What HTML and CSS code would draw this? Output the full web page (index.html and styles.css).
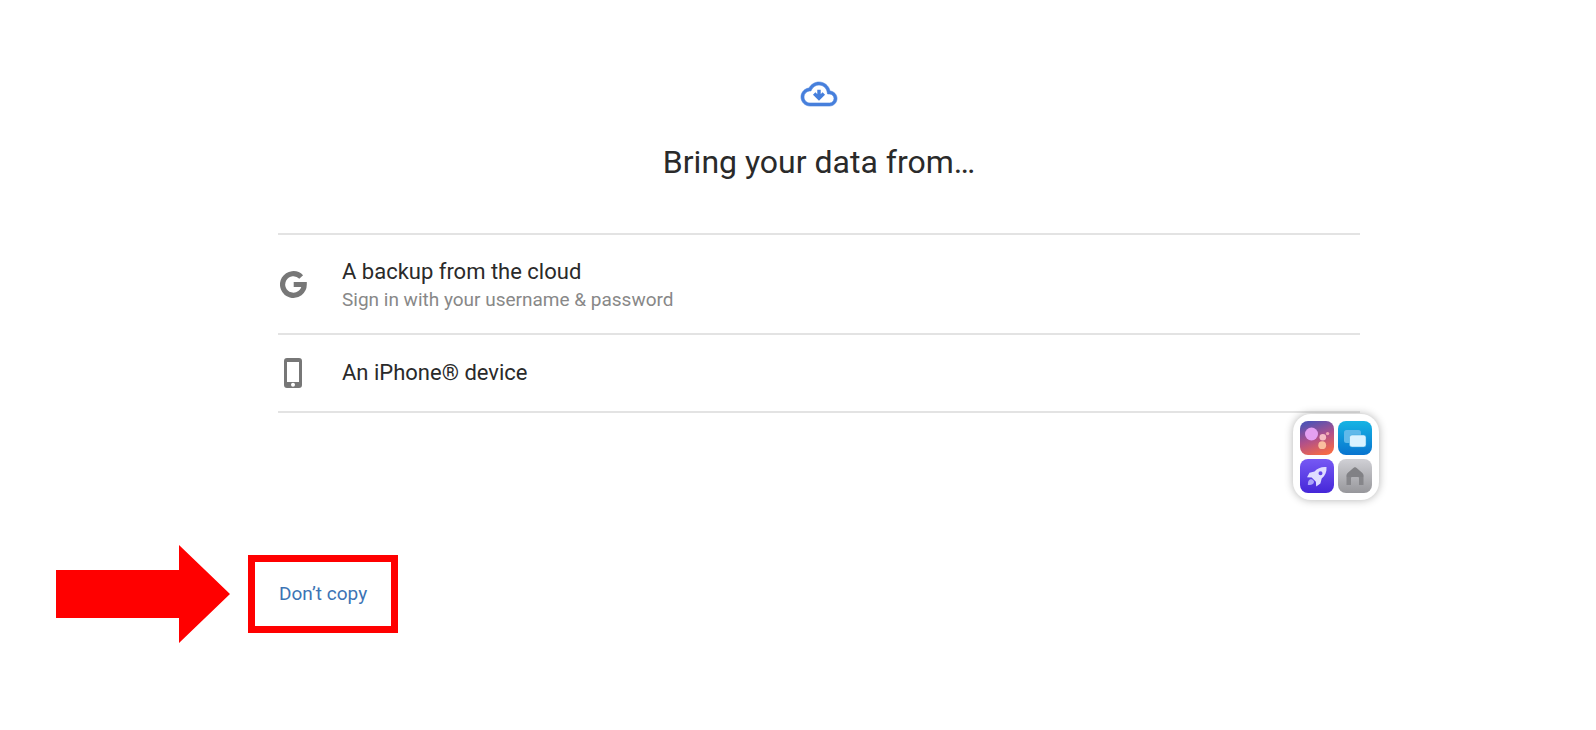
FILE: index.html
```html
<!DOCTYPE html>
<html lang="en">
<head>
<meta charset="utf-8">
<title>Bring your data from…</title>
<link rel="stylesheet" href="styles.css">
</head>
<body>
<main class="setup">
  <header class="intro">
    <svg class="cloud" viewBox="0 4 24 16" aria-hidden="true">
      <path fill="currentColor" stroke="currentColor" stroke-width=".4" d="M19.35 10.04C18.67 6.59 15.64 4 12 4 9.11 4 6.6 5.64 5.35 8.04 2.34 8.36 0 10.91 0 14c0 3.31 2.69 6 6 6h13c2.76 0 5-2.24 5-5 0-2.64-2.05-4.78-4.65-4.96zM19 18H6c-2.21 0-4-1.79-4-4 0-2.05 1.53-3.76 3.56-3.97l1.07-.11.5-.95C8.08 7.14 9.94 6 12 6c2.62 0 4.88 1.86 5.39 4.43l.3 1.5 1.53.11c1.56.1 2.78 1.41 2.78 2.96 0 1.65-1.35 3-3 3z"/>
      <path fill="none" stroke="currentColor" stroke-width="2.300" d="M12 9.200v5.800M8.800 11.700l3.200 3.200 3.200-3.200"/>
    </svg>
    <h1 class="title">Bring your data from…</h1>
  </header>
  <div class="options">
    <button class="option option-tall" type="button">
      <span class="option-icon">
        <svg class="google" viewBox="0 0 27 27" aria-hidden="true"><path fill="none" stroke="currentColor" stroke-width="5.200" d="M21.200 6A10.800 10.800 0 1 0 24.200 13.500H13.700"/></svg>
      </span>
      <span class="option-text">
        <span class="option-name">A backup from the cloud</span>
        <span class="option-note">Sign in with your username &amp; password</span>
      </span>
    </button>
    <button class="option" type="button">
      <span class="option-icon">
        <svg class="phone" viewBox="0 0 18 30" aria-hidden="true"><path fill="currentColor" fill-rule="evenodd" d="M3 0h12a3 3 0 0 1 3 3v24a3 3 0 0 1-3 3H3a3 3 0 0 1-3-3V3a3 3 0 0 1 3-3zM3 4v20h12V4zM9 24.800a2 2 0 1 0 0 4 2 2 0 0 0 0-4z"/></svg>
      </span>
      <span class="option-text">
        <span class="option-name">An iPhone® device</span>
      </span>
    </button>
  </div>
  <footer class="actions">
    <svg class="arrow" viewBox="0 0 174 98" aria-hidden="true"><path fill="#f00" d="M0 25h123V0l51 49-51 49V73H0z"/></svg>
    <button class="skip" type="button">Don’t copy</button>
  </footer>
</main>
<aside class="launcher" aria-label="Shortcuts">
  <button class="tile tile-assistant" type="button" aria-label="Assistant">
    <svg viewBox="0 0 34 34"><circle cx="11.500" cy="13" r="6.500" fill="#e4a0f2"/><circle cx="22.800" cy="16.200" r="3.300" fill="#f5bcc4"/><circle cx="22.200" cy="24.200" r="3.900" fill="#fabe9f"/><circle cx="27.600" cy="12.600" r="1.700" fill="#f0a4b1"/></svg>
  </button>
  <button class="tile tile-windows" type="button" aria-label="Windows">
    <svg viewBox="0 0 34 34"><rect x="6" y="9" width="17" height="13" rx="2.500" fill="#5fb9ea"/><rect x="11.500" y="14" width="16.500" height="12" rx="2.500" fill="#d9f2ff" stroke="#35a5df" stroke-width=".5"/></svg>
  </button>
  <button class="tile tile-boost" type="button" aria-label="Boost">
    <svg viewBox="0 0 34 34"><path fill="#dfdcff" fill-rule="evenodd" d="M26.500 8c-5-.5-9 1.100-12 4.500l-5 1.200-2.500 4.500 4.700.3 4.200 4.300.3 4.700 4.200-3 1.300-5c3.500-3 5.200-6.500 4.800-11.500zM20.500 12.300a2 2 0 1 1 0 4 2 2 0 0 1 0-4z"/><path fill="#aba3fa" d="M12 20.300c-3-.8-4.300 2-4.100 5.800 3.900.2 6.500-1.100 6-4z"/></svg>
  </button>
  <button class="tile tile-home" type="button" aria-label="Home">
    <svg viewBox="0 0 34 34"><path fill="#86868a" d="M8.500 26V16.500q0-1.500 1.200-2.500l5.700-5q1.600-1.400 3.200 0l5.700 5q1.200 1 1.200 2.500V26h-4.500v-7q0-1-1-1h-6q-1 0-1 1v7z"/><path fill="#77777b" d="M8.500 18v-1.500q0-1.500 1.200-2.500l5.700-5q1.600-1.400 3.200 0l5.700 5q1.200 1 1.200 2.500V18z" opacity=".3"/></svg>
  </button>
</aside>
</body>
</html>
```
FILE: styles.css
```css
* {
  box-sizing: border-box;
}

body {
  margin: 0;
  background: #fff;
  color: #2a2a2a;
  font-family: Roboto, "Liberation Sans", sans-serif;
}

button {
  margin: 0;
  border: 0;
  background: none;
  color: inherit;
  font: inherit;
  text-align: left;
  cursor: pointer;
}

svg {
  display: block;
}

.setup {
  padding: 82px 236px 40px 278px;
}

.intro {
  display: flex;
  flex-direction: column;
  align-items: center;
}

.cloud {
  width: 36px;
  height: 24px;
  overflow: visible;
  color: #467fdc;
}

.title {
  margin: 36px 0 51px;
  font-size: 32px;
  line-height: 40px;
  font-weight: 400;
}

.options {
  display: flex;
  flex-direction: column;
  border-top: 2px solid #e3e3e3;
}

.option {
  display: flex;
  align-items: center;
  gap: 34px;
  width: 100%;
  min-height: 78px;
  padding: 0;
  border-bottom: 2px solid #e3e3e3;
}

.option-tall {
  min-height: 100px;
}

.option-tall .option-text {
  padding-top: 4px;
}

.option-icon {
  display: flex;
  justify-content: center;
  width: 30px;
  color: #777;
}

.google {
  width: 27px;
  height: 27px;
}

.phone {
  width: 18px;
  height: 30px;
}

.option-text {
  display: flex;
  flex-direction: column;
}

.option-name {
  font-size: 22px;
  line-height: 28px;
}

.option-note {
  color: #888;
  font-size: 19px;
  line-height: 28px;
}

.actions {
  display: flex;
  align-items: center;
  gap: 18px;
  margin: 132px 0 0 -222px;
}

.arrow {
  width: 174px;
  height: 98px;
}

.skip {
  padding: 20px 24px;
  border: 7px solid #f00;
  color: #3c74b5;
  font-size: 19px;
  line-height: 24px;
}

.launcher {
  position: absolute;
  top: 414px;
  right: 217px;
  display: grid;
  grid-template-columns: 34px 34px;
  gap: 4px;
  padding: 7px;
  border-radius: 18px;
  background: #fff;
  box-shadow: 0 0 9px rgba(0, 0, 0, 0.3);
}

.tile {
  width: 34px;
  height: 34px;
  padding: 0;
  border-radius: 8px;
}

.tile-assistant {
  background: linear-gradient(160deg, #5252b4 10%, #b0508a 50%, #f46a48 90%);
}

.tile-windows {
  background: linear-gradient(#16b4e4, #0874cf);
}

.tile-boost {
  background: linear-gradient(#7659f4, #4527d8);
}

.tile-home {
  background: linear-gradient(#d0d0d5, #97979b);
}
```
